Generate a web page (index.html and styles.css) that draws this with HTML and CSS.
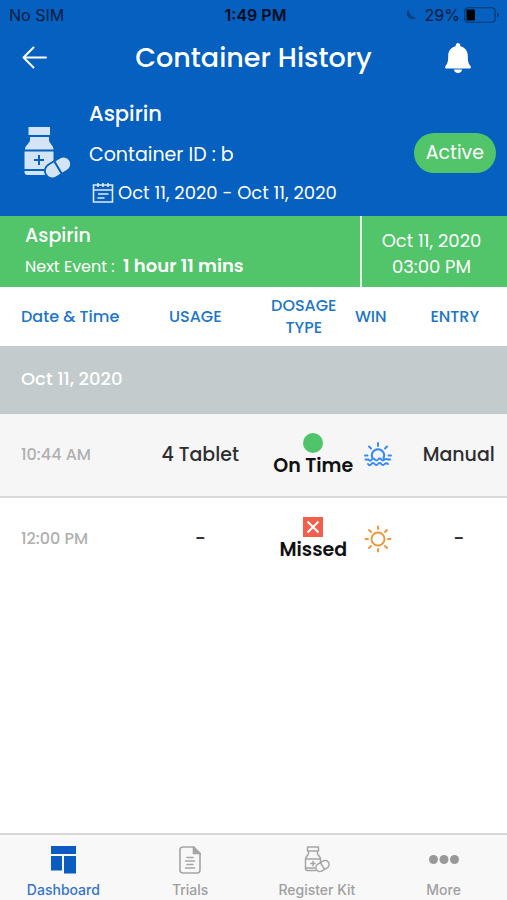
FILE: index.html
```html
<!DOCTYPE html>
<html lang="en">
<head>
<meta charset="utf-8">
<meta name="viewport" content="width=device-width, initial-scale=1">
<title>Container History</title>
<link rel="stylesheet" href="styles.css">
</head>
<body>
<div class="app">
  <header class="top">
    <div class="status">
      <span class="carrier">No SIM</span>
      <span class="clock">1:49 PM</span>
      <span class="battery">
        <svg class="moon" width="12" height="12" viewBox="0 0 12 12" aria-hidden="true"><path d="M3.500.5A5.700 5.700 0 1 0 11.600 8.600C8 9 4 5.500 3.500.5z" fill="#053f82"/></svg>
        <span>29%</span>
        <svg width="36" height="16" viewBox="0 0 36 16" aria-hidden="true"><rect x=".75" y=".75" width="30.500" height="14.500" rx="3.500" fill="none" stroke="#04366f" stroke-width="1.200"/><rect x="2.500" y="2.500" width="8.500" height="11" rx="1" fill="#000"/><path d="M33 5.500c2.400.8 2.400 4.200 0 5z" fill="#04366f"/></svg>
      </span>
    </div>
    <div class="titlebar">
      <button class="icon-btn" type="button" aria-label="Back">
        <svg width="26" height="24" viewBox="0 0 26 24" fill="none" stroke="#fff" stroke-width="2" stroke-linecap="round" stroke-linejoin="round"><path d="M24 11.500H1.500M11.500 1.500 1.500 11.500 11.500 21.500"/></svg>
      </button>
      <h1>Container History</h1>
      <button class="icon-btn bell" type="button" aria-label="Notifications">
        <svg width="26" height="32" viewBox="0 0 26 32" fill="#fff"><path d="M13 1c1.400 0 2.300 1 2.300 2.500v.8c4.600 1 7.500 4.700 7.500 9.700 0 5.500.7 7.600 2.500 9.700 1.200 1.500.5 2.800-1 2.800H1.700c-1.500 0-2.200-1.300-1-2.800 1.800-2.100 2.500-4.200 2.500-9.700 0-5 2.900-8.700 7.500-9.700v-.8C10.700 2 11.600 1 13 1z"/><path d="M9 27.500h8c0 2.200-1.800 3.500-4 3.500s-4-1.300-4-3.500z"/></svg>
      </button>
    </div>
    <section class="info">
      <svg class="bottle" width="48" height="52" viewBox="0 0 48 52" aria-hidden="true">
        <g fill="#d3e4f6">
          <rect x="4.500" y="0" width="21.500" height="8"/>
          <path d="M6 10h19v3c0 3.500 4.500 5 4.500 9.500H1c0-4.500 5-6 5-9.500z"/>
          <path d="M.5 24.500H29.500V42H.5z"/>
          <path d="M.5 44H29.500v1a3 3 0 0 1-3 3H3.500a3 3 0 0 1-3-3z"/>
        </g>
        <path d="M15 28v10M10 33h10" stroke="#0560bf" stroke-width="2"/>
        <g transform="rotate(-31 34 40.500)"><rect x="20" y="33" width="28" height="15" rx="7.500" fill="#d3e4f6" stroke="#0560bf" stroke-width="1.800"/><path d="M34 33v15" stroke="#0560bf" stroke-width="2"/></g>
      </svg>
      <div class="details">
        <h2>Aspirin</h2>
        <p class="cid">Container ID : b</p>
        <p class="range">
          <svg width="22" height="21" viewBox="0 0 22 21" fill="none" stroke="#dfeaf8" stroke-width="1.600" aria-hidden="true"><path d="M1.500 2h19v17h-19zM1.500 7h19M6 0v4M11 0v4M16 0v4M6 11h10.500M5.500 15h7"/></svg>
          <span>Oct 11, 2020 - Oct 11, 2020</span>
        </p>
      </div>
      <span class="badge">Active</span>
    </section>
  </header>

  <section class="next">
    <div class="event">
      <h3>Aspirin</h3>
      <p>Next Event : <strong>1 hour 11 mins</strong></p>
    </div>
    <p class="when">Oct 11, 2020<br>03:00 PM</p>
  </section>

  <main>
    <table>
      <colgroup><col class="c-date"><col class="c-usage"><col class="c-type"><col class="c-win"><col class="c-entry"></colgroup>
      <thead>
        <tr><th class="date" scope="col">Date &amp; Time</th><th class="usage" scope="col">USAGE</th><th class="type" scope="col">DOSAGE TYPE</th><th class="win" scope="col">WIN</th><th class="entry" scope="col">ENTRY</th></tr>
      </thead>
      <tbody>
        <tr class="day"><th class="date" colspan="5" scope="rowgroup">Oct 11, 2020</th></tr>
        <tr class="shaded">
          <td class="date">10:44 AM</td>
          <td>4 Tablet</td>
          <td class="dose"><span class="dot"></span>On Time</td>
          <td><svg class="sky" width="28" height="28" viewBox="0 0 28 28" fill="none" stroke="#3389f5" stroke-width="1.900" stroke-linecap="round" role="img" aria-label="Morning"><path d="M8.600 17.500a6.200 6.200 0 1 1 10.800 0M14 2v3M5 5.500l2 2M23 5.500l-2 2M1 14.500h2.500M24.500 14.500H27M1.500 18.500h3q1.600 2.600 3.200 0 1.600-2 3.200 0t3.200 0q1.600-2 3.200 0t3.200 0q1.600-1 3.200 0h2.500M4 23q1.700 2.400 3.400 0 1.600-2 3.300 0t3.300 0q1.700-2 3.300 0t3.300 0q1.700-1.500 3.400 0"/></svg></td>
          <td class="entry">Manual</td>
        </tr>
        <tr>
          <td class="date">12:00 PM</td>
          <td>-</td>
          <td class="dose"><svg width="20" height="20" viewBox="0 0 20 20" aria-hidden="true"><path d="M0 0h20v20H0z" fill="#f0604d"/><path d="m4.500 4.500 11 11m0-11-11 11" stroke="#fff" stroke-width="2"/></svg>Missed</td>
          <td><svg class="sky" width="28" height="28" viewBox="0 0 28 28" fill="none" stroke="#ef9636" stroke-width="1.900" stroke-linecap="round" role="img" aria-label="Noon"><circle cx="14" cy="14" r="6.500"/><path d="M14 1.500v2.500M14 24v2.500M1.500 14H4M24 14h2.500M5 5l2 2M21 21l2 2M5 23l2-2M21 7l2-2"/></svg></td>
          <td class="entry">-</td>
        </tr>
      </tbody>
    </table>
  </main>

  <nav class="tabs">
    <a class="on" href="#dashboard"><svg width="26" height="28" viewBox="0 0 26 28" fill="#0b5cc0"><path d="M1 0h25v8H1zM1 10h11v14.500H1zM14 10h12v17.500H14z"/></svg>Dashboard</a>
    <a href="#trials"><svg width="22" height="28" viewBox="0 0 22 28" fill="none" stroke="#a5a5a5" stroke-width="1.600" stroke-linecap="round"><path d="M4 1h10.500l6.500 6.500V24a3 3 0 0 1-3 3H4a3 3 0 0 1-3-3V4a3 3 0 0 1 3-3z"/><path d="M14.500 1v6.500H21z" fill="#a5a5a5"/><path d="M8 11.500h6M6.500 15h9M8 18.500h6M6.500 22h9"/></svg>Trials</a>
    <a href="#register"><svg width="26" height="28" viewBox="0 0 26 28" fill="none" stroke="#a5a5a5" stroke-width="1.500" stroke-linejoin="round"><path d="M3.500 1h11v4h-11zM4.500 5v2.500C4.500 9.500 1.500 10 1.500 13v9.500A2 2 0 0 0 3.500 24.500H12M13.500 5v2.500c0 2 3 2.500 3 5.500v3M1.500 13h15M1.500 22h10M9 14.800v5.500M6.200 17.500h5.500"/><g transform="rotate(-31 18.500 20)"><rect x="11.500" y="16" width="14" height="8" rx="4"/><path d="M18.500 16v8"/></g></svg>Register Kit</a>
    <a href="#more"><svg width="30" height="28" viewBox="0 0 30 28" fill="#999"><circle cx="4.500" cy="13.500" r="4.500"/><circle cx="15" cy="13.500" r="4.500"/><circle cx="25.500" cy="13.500" r="4.500"/></svg>More</a>
  </nav>
</div>
</body>
</html>
```
FILE: styles.css
```css
* { box-sizing: border-box; }
body { margin: 0; font-family: Poppins, Inter, sans-serif; color: #2e2e32; background: #fff; }
h1, h2, h3, p { margin: 0; font-weight: 500; }
svg { display: block; flex: none; }
.app { min-height: 100vh; display: flex; flex-direction: column; }

.top { background: #0560bf; color: #fff; }
.status { display: grid; grid-template-columns: 1fr auto 1fr; align-items: center; height: 30px; padding: 0 7px 0 9px; color: #031c3e; font: 16px/20px Inter, sans-serif; }
.clock { padding-left: 2px; color: #000c20; font-weight: 600; }
.battery { display: flex; align-items: center; justify-content: flex-end; gap: 4px; }
.moon { margin-right: 4px; }
.titlebar { display: grid; grid-template-columns: 1fr auto 1fr; align-items: center; height: 55px; padding: 0 36px 0 36px; }
.titlebar h1 { font-size: 27px; line-height: 36px; }
.icon-btn { justify-self: start; margin-left: -14px; padding: 0; border: 0; background: none; }
.bell { justify-self: end; margin: 0; }
.info { display: flex; align-items: center; padding: 13px 11px 9px 24px; }
.details { flex: 1; margin-left: 17px; font-size: 18px; }
.details h2 { font-size: 21px; line-height: 32px; }
.details p { line-height: 28px; font-weight: 400; }
.details .cid { margin-top: 11px; font-size: 19px; }
.details .range { display: flex; align-items: center; gap: 4px; margin: 10px 0 0 3px; }
.badge { padding: 0 12px; border-radius: 20px; background: #52c469; font-size: 19px; line-height: 40px; }

.next { display: flex; background: #52c469; color: #fff; }
.event { flex: 1; padding: 6px 0 6px 25px; }
.event h3 { font-size: 19px; line-height: 28px; }
.event p { margin-top: 3px; font-size: 16px; line-height: 28px; font-weight: 400; }
.event strong { margin-left: 4px; font-size: 18px; line-height: 24px; font-weight: 600; }
.when { width: 29%; padding: 12px 6px 7px 0; border-left: 2px solid #e6f7e9; font-size: 18px; line-height: 26px; font-weight: 400; text-align: center; }

main { flex: 1; }
table { width: 100%; border-collapse: collapse; table-layout: fixed; }
.c-date { width: 26%; }
.c-usage { width: 27%; }
.c-type { width: 17%; }
.c-win { width: 9%; }
th, td { padding: 0; text-align: center; }
th { font-weight: 500; }
thead th { height: 59px; color: #2176c7; font-size: 16px; line-height: 22px; }
.date { padding-left: 21px; text-align: left; white-space: nowrap; }
thead .usage { padding-right: 10px; }
thead .type { padding-right: 16px; }
thead .win { padding-right: 14px; }
.entry { padding-left: 10px; }
thead .entry { padding-left: 2px; }
.day th { height: 68px; background: #c3cbcc; color: #fff; font-size: 18px; line-height: 24px; padding-bottom: 2px; }
td { height: 83px; font-size: 19px; line-height: 24px; font-weight: 500; }
td.date { color: #b0b0b0; font-size: 16px; }
.shaded { background: #f6f6f6; border-bottom: 2px solid #d9dadb; }
.dose { padding-left: 3px; color: #101012; font-weight: 600; white-space: nowrap; }
.dose svg, .dot { display: block; width: 20px; height: 20px; margin: 0 auto 1px; }
.dot { border-radius: 50%; background: #4fc468; }
.sky { margin: 0 auto; }

.tabs { display: grid; grid-template-columns: repeat(4, 1fr); border-top: 2px solid #d8d8da; background: #f8f8f8; padding: 11px 0 0; }
.tabs a { display: flex; flex-direction: column; align-items: center; gap: 6px; color: #a0a0a0; font: 500 14px/20px Inter, sans-serif; text-decoration: none; }
.tabs .on { color: #3674c9; }
```
